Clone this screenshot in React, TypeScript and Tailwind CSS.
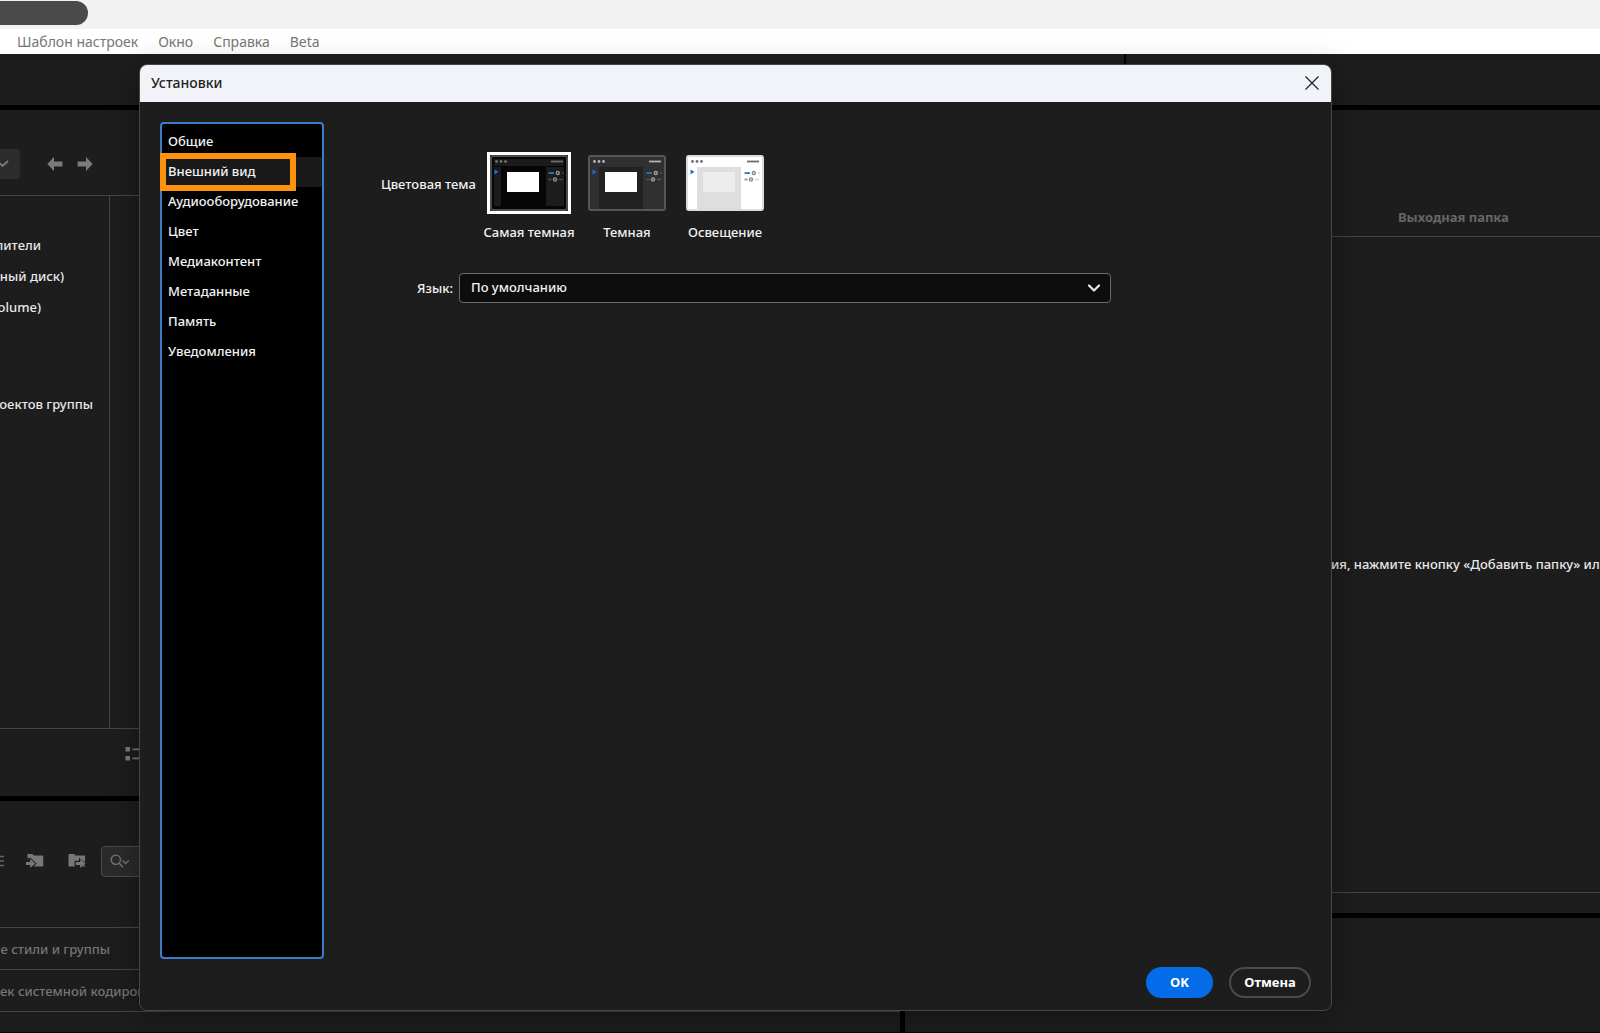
import { useState } from 'react'
import clsx from 'clsx'

type Theme = {
  id: string
  label: string
  frame: string
  inset: string
  bar: string
  side: string
  canvas: string
  sheet: string
  dots: string
  knob: string
}

const menu = ['Шаблон настроек', 'Окно', 'Справка', 'Beta']

const sections = [
  'Общие',
  'Внешний вид',
  'Аудиооборудование',
  'Цвет',
  'Медиаконтент',
  'Метаданные',
  'Память',
  'Уведомления',
]

const themes: Theme[] = [
  { id: 'darkest', label: 'Самая темная', frame: '#4b4b4b', inset: '#060606', bar: '#1b1b1b', side: '#1c1c1c', canvas: '#060606', sheet: '#ffffff', dots: '#6e6e6e', knob: '#8f8f8f' },
  { id: 'dark', label: 'Темная', frame: '#565656', inset: '#303030', bar: '#303030', side: '#303030', canvas: '#222222', sheet: '#ffffff', dots: '#b4b4b4', knob: '#a0a0a0' },
  { id: 'light', label: 'Освещение', frame: '#dcdcdc', inset: '#ffffff', bar: '#ffffff', side: '#ffffff', canvas: '#dedede', sheet: '#ededed', dots: '#6e6e6e', knob: '#8a8a8a' },
]

function ThemePreview({ theme }: { theme: Theme }) {
  return (
    <svg viewBox="0 0 78 56" className="h-14 w-[78px]" aria-hidden="true">
      <rect x="1" y="1" width="76" height="54" rx="2" fill={theme.inset} stroke={theme.frame} strokeWidth="2" />
      <rect x="11" y="12" width="44" height="42" fill={theme.canvas} />
      <rect x="4" y="4" width="70" height="7" fill={theme.bar} />
      <rect x="4" y="12" width="7" height="39" fill={theme.side} />
      <rect x="56" y="12" width="18" height="39" fill={theme.side} />
      <g fill={theme.dots}>
        <circle cx="6.5" cy="6.5" r="1.4" />
        <circle cx="11" cy="6.5" r="1.4" />
        <circle cx="15.5" cy="6.5" r="1.4" />
        <rect x="61" y="5.6" width="12" height="1.8" />
      </g>
      <path d="M4.5 14.5 L8.5 16.8 L4.5 19.5 Z" fill="#1473e6" />
      <rect x="17" y="17" width="32" height="20" fill={theme.sheet} />
      <rect x="58.5" y="17.2" width="5.5" height="1.8" fill="#2f73c4" />
      <circle cx="67.8" cy="18" r="2.2" fill={theme.knob} />
      <rect x="67.3" y="17" width="1" height="2" fill={theme.side} />
      <rect x="72" y="17.4" width="2" height="1.2" fill={theme.knob} opacity="0.4" />
      <rect x="58.5" y="23.6" width="3" height="1.8" fill="#2f73c4" opacity="0.7" />
      <circle cx="65" cy="24.5" r="2.2" fill={theme.knob} />
      <rect x="64.5" y="23.5" width="1" height="2" fill={theme.side} />
      <rect x="69" y="23.9" width="4" height="1.2" fill={theme.knob} opacity="0.4" />
    </svg>
  )
}

function ArrowIcon({ flip }: { flip?: boolean }) {
  return (
    <svg viewBox="0 0 16 16" className={clsx('size-4', flip && 'rotate-180')} fill="#7b7b7b" aria-hidden="true">
      <path d="M0.3 8 L7 1 V5.6 H15.4 V10.4 H7 V15 Z" />
    </svg>
  )
}

function ImportIcon() {
  return (
    <svg viewBox="0 0 18 16" className="h-4 w-[18px]" aria-hidden="true">
      <path d="M1.5 1 H6.5 L8 2.5 H17.2 V13.6 H1.5 Z" fill="#777" />
      <path d="M-1 8.2 L1.5 5.4 L4.4 4.8 L10.6 10.4 L5.4 16 H-1 Z" fill="#1d1d1d" />
      <path d="M0 8.9 H4.2 V5.8 L9.4 10.4 L4.2 15 V11.9 H0 Z" fill="#777" />
    </svg>
  )
}

function ExportIcon() {
  return (
    <svg viewBox="0 0 18 16" className="h-4 w-[18px]" aria-hidden="true">
      <path d="M0.5 1 H6 L7.5 2.5 H17 V13.6 H0.5 Z" fill="#777" />
      <path d="M6.6 7.8 H11 V4.8 L18.4 10.4 L11 16 H6.6 Z" fill="#1d1d1d" />
      <path d="M7.8 8.9 H12.2 V6 L17.6 10.4 L12.2 15 V11.9 H7.8 Z" fill="#777" />
    </svg>
  )
}

function MediaBrowser() {
  return (
    <section className="flex flex-1 flex-col overflow-hidden">
      <div className="flex h-[86px] items-center border-b border-[#464646] pt-[22px]">
        <button aria-label="Список" className="flex h-[30px] w-5 items-center justify-start rounded-r bg-[#2c2c2c]">
          <svg viewBox="0 0 10 8" className="h-2 w-2.5" fill="none" stroke="#7b7b7b" strokeWidth="1.8" aria-hidden="true">
            <path d="M-2 1.5 L2.5 6 L8 1" />
          </svg>
        </button>
        <button aria-label="Назад" className="ml-[27px]">
          <ArrowIcon />
        </button>
        <button aria-label="Вперед" className="ml-3.5">
          <ArrowIcon flip />
        </button>
      </div>
      <div className="flex flex-1">
        <div className="w-[110px] border-r border-[#464646] pt-[34px] leading-[31px] whitespace-nowrap text-[#e8e8e8]">
          <p className="flex w-[41px] justify-end">пители</p>
          <p className="flex w-16 justify-end">ный диск)</p>
          <p className="flex w-[41px] justify-end">olume)</p>
          <p className="mt-[66px] flex w-[93px] justify-end">оектов группы</p>
        </div>
      </div>
      <div className="h-[68px] border-t border-[#464646] pt-[17px] pl-[125px]">
        <svg viewBox="0 0 20 16" className="h-4 w-5" fill="#7b7b7b" aria-hidden="true">
          <path d="M0.5 1 H5 V5.5 H0.5 Z M7.5 2.5 H20 V4.3 H7.5 Z M0.5 10 H5 V14.5 H0.5 Z M7.5 11.5 H20 V13.3 H7.5 Z" />
        </svg>
      </div>
    </section>
  )
}

function PresetBrowser() {
  return (
    <section className="border-t-5 border-black text-[#757575]">
      <div className="flex h-[127px] items-center border-b border-[#464646] pb-1.5">
        <svg viewBox="0 0 4 12" className="h-3 w-1" stroke="#666" strokeWidth="1.4" aria-hidden="true">
          <path d="M0 1.5 H4 M0 6 H4 M0 10.5 H4" />
        </svg>
        <button aria-label="Импорт стиля" className="ml-[22px]">
          <ImportIcon />
        </button>
        <button aria-label="Экспорт стиля" className="ml-6">
          <ExportIcon />
        </button>
        <div className="ml-[15px] flex h-[31px] w-56 items-center rounded border border-[#4a4a4a] bg-[#2b2b2b] pl-2">
          <svg viewBox="0 0 20 14" className="h-3.5 w-5 shrink-0" fill="none" stroke="#777" strokeWidth="1.3" aria-hidden="true">
            <circle cx="5.8" cy="5.8" r="4.6" />
            <path d="M9.2 9.2 L13 13.2 M12.5 6.5 L15.6 9.6 L18.8 6.2" />
          </svg>
          <input aria-label="Поиск" className="w-full bg-transparent outline-none" />
        </div>
      </div>
      <p className="flex h-[42px] items-center border-b border-[#464646] pt-0.5 whitespace-nowrap">
        <span className="flex w-[110px] justify-end">е стили и группы</span>
      </p>
      <p className="flex h-[42px] items-center border-b border-[#464646] pt-0.5 whitespace-nowrap">ек системной кодировки</p>
      <div className="h-5" />
    </section>
  )
}

function QueuePanel() {
  return (
    <div className="flex flex-1 flex-col overflow-hidden">
      <section className="flex flex-1 flex-col">
        <h2 className="flex h-[127px] items-end border-b border-[#464646] pb-[9px] pl-[493px] leading-5 font-bold text-[#666]">
          Выходная папка
        </h2>
        <p className="flex flex-1 items-center pl-[426px] whitespace-nowrap text-[#e8e8e8]">
          ия, нажмите кнопку «Добавить папку» ил
        </p>
        <div className="h-[21px] border-t border-[#464646]" />
      </section>
      <section className="h-[119px] border-t-5 border-black" />
    </div>
  )
}

function SettingsDialog() {
  const [section, setSection] = useState('Внешний вид')
  const [theme, setTheme] = useState('darkest')

  return (
    <div
      role="dialog"
      aria-labelledby="dialog-title"
      className="absolute top-16 right-[268px] bottom-[21px] left-[139px] flex flex-col overflow-hidden rounded-lg border border-[#464646] bg-[#1d1d1d] text-[#f2f2f2] shadow-[0_6px_32px_rgba(0,0,0,0.35)]"
    >
      <header className="flex h-[37px] shrink-0 items-center justify-between bg-[#f1f3f8] pr-3 pb-0.5 pl-[11px] text-[#1f1f1f]">
        <h1 id="dialog-title" className="text-sm">Установки</h1>
        <button aria-label="Закрыть">
          <svg viewBox="0 0 14 14" className="size-3.5" stroke="#1f1f1f" strokeWidth="1.2" aria-hidden="true">
            <path d="M0.5 0.5 L13.5 13.5 M13.5 0.5 L0.5 13.5" />
          </svg>
        </button>
      </header>

      <div className="flex flex-1 gap-14 px-5 pt-5">
        <nav className="w-[164px] shrink-0 rounded border-2 border-[#3d7cc9] bg-black pt-[3px]">
          {sections.map((name) => (
            <button
              key={name}
              onClick={() => setSection(name)}
              className={clsx('relative block h-[30px] w-full pl-1.5 text-left', section === name && 'bg-[#191919]')}
            >
              {name}
              {section === name && (
                <span className="absolute -top-1 -left-0.5 h-[38px] w-[136px] border-6 border-[#fb930f]" />
              )}
            </button>
          ))}
        </nav>

        <form className="flex-1 pt-[30px]">
          <fieldset className="flex">
            <legend className="sr-only">Цветовая тема</legend>
            <span aria-hidden="true" className="w-24 pt-[22px] text-right leading-5">Цветовая тема</span>
            <div className="ml-1 flex">
              {themes.map((t) => (
                <label key={t.id} className="flex w-[98px] flex-col items-center">
                  <input
                    type="radio"
                    name="theme"
                    className="sr-only"
                    checked={theme === t.id}
                    onChange={() => setTheme(t.id)}
                  />
                  <span className={clsx('border-3', theme === t.id ? 'border-white' : 'border-transparent')}>
                    <ThemePreview theme={t} />
                  </span>
                  <span className="mt-2 leading-5 whitespace-nowrap">{t.label}</span>
                </label>
              ))}
            </div>
          </fieldset>

          <div className="mt-[31px] flex items-center">
            <label htmlFor="language" className="w-[73px] pt-0.5 text-right">Язык:</label>
            <div className="relative ml-1.5 w-[652px]">
              <select
                id="language"
                className="h-[30px] w-full appearance-none rounded border border-[#6a6a6a] bg-[#0d0d0d] pl-[11px]"
              >
                <option>По умолчанию</option>
              </select>
              <svg viewBox="0 0 14 10" className="pointer-events-none absolute top-2.5 right-2.5 h-2.5 w-3.5" fill="none" stroke="#e6e6e6" strokeWidth="2.2" strokeLinecap="round" strokeLinejoin="round" aria-hidden="true">
                <path d="M2 2.5 L7 7.5 L12 2.5" />
              </svg>
            </div>
          </div>
        </form>
      </div>

      <footer className="flex shrink-0 justify-end gap-4 px-5 pt-2 pb-3 font-bold text-white">
        <button className="h-[31px] w-[67px] rounded-full bg-[#056ce9]">OK</button>
        <button className="h-[31px] w-[82px] rounded-full border-2 border-[#4b4b4b]">Отмена</button>
      </footer>
    </div>
  )
}

export default function App() {
  return (
    <div className="relative flex h-screen flex-col overflow-hidden border-b border-black bg-[#1d1d1d] font-['Noto_Sans','Open_Sans',sans-serif] text-[13px] font-medium">
      <div className="h-[29px] shrink-0 bg-[#f2f2f2] pt-px">
        <div className="h-6 w-[88px] rounded-r-full bg-[#4a4a4a]" />
      </div>
      <nav className="flex h-[25px] shrink-0 items-center gap-5 bg-white pl-[17px] text-sm font-normal text-[#777]">
        {menu.map((item) => (
          <button key={item}>{item}</button>
        ))}
      </nav>
      <div className="flex h-14 shrink-0 border-b-5 border-black">
        <div className="w-[1126px] border-r-2 border-black" />
      </div>
      <main className="flex flex-1">
        <div className="flex w-[900px] flex-col">
          <MediaBrowser />
          <PresetBrowser />
        </div>
        <div className="w-[5px] bg-black" />
        <QueuePanel />
      </main>
      <SettingsDialog />
    </div>
  )
}
